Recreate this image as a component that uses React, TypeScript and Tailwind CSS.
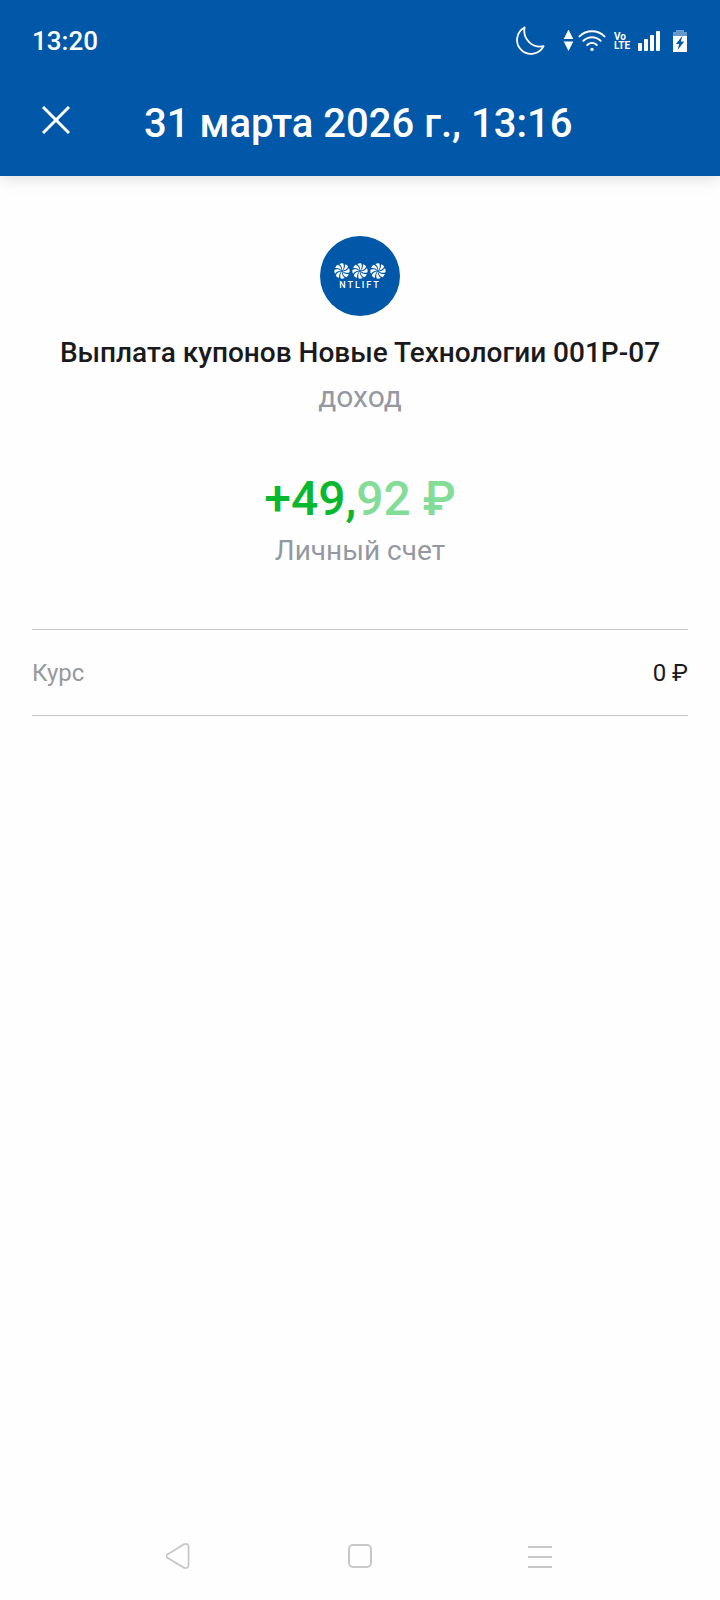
const BLADES = [0, 45, 90, 135, 180, 225, 270, 315];

function Fan() {
    return (
        <svg width="16" height="16" viewBox="-8 -8 16 16" fill="currentColor" aria-hidden="true">
            {BLADES.map((angle) => (
                <path
                    key={angle}
                    d="M0 -0.6 C0.5 -2.8 -0.4 -4.8 -2.7 -6.9 C-1.2 -7.7 0.2 -7.8 1.3 -7.5 C2.3 -5 1.8 -2.4 0 -0.6 Z"
                    transform={`rotate(${angle})`}
                />
            ))}
        </svg>
    );
}

function StatusBar() {
    return (
        <div className="flex h-[82px] items-center justify-between px-8">
            <span className="text-[26px] leading-8 font-medium">13:20</span>

            <div className="flex items-center">
                <svg width="30" height="30" viewBox="0 0 30 30" fill="none" stroke="currentColor" strokeWidth="1.8" strokeLinejoin="round" aria-label="Не беспокоить">
                    <path d="M8.6 1.5 A14 14 0 1 0 27.6 20.2 C16.5 22.6 6.4 13 8.6 1.5 Z" />
                </svg>
                <svg className="ml-4" width="12" height="22" viewBox="0 0 12 22" fill="currentColor" aria-hidden="true">
                    <path d="M6.5 -0.5 L11.3 9 H1.7 Z M6.5 21 L11.3 11.5 H1.7 Z" />
                </svg>
                <svg className="ml-1" width="28" height="22" viewBox="0 0 28 22" fill="none" stroke="currentColor" strokeWidth="2" strokeLinecap="round" aria-label="Wi-Fi">
                    <path d="M1.5 6.4 C8.5 -0.5 19.5 -0.5 26.5 6.4" />
                    <path d="M5.4 10.8 C10.4 6 17.6 6 22.6 10.8" />
                    <path d="M9.2 15 C12 12.4 16 12.4 18.8 15" />
                    <circle cx="14" cy="19.4" r="1.7" fill="currentColor" stroke="none" />
                </svg>
                <span className="ml-2 flex w-4 flex-col font-['Liberation_Sans_Narrow',Roboto,sans-serif] text-[10px] leading-[9px] font-bold">
                    <span>Vo</span>
                    <span>LTE</span>
                </span>
                <svg className="ml-2" width="22" height="20" viewBox="0 0 22 20" fill="currentColor" aria-label="Сигнал сети">
                    <rect x="0" y="12" width="4" height="8" rx="1" />
                    <rect x="6" y="8" width="4" height="12" rx="1" />
                    <rect x="12" y="4" width="4" height="16" rx="1" />
                    <rect x="18" y="0" width="4" height="20" rx="1" />
                </svg>
                <svg className="ml-3" width="16" height="22" viewBox="0 0 16 22" fill="currentColor" aria-label="Батарея заряжается">
                    <path d="M4 0 H12 V2 H15 V6 H1 V2 H4 Z" opacity="0.4" />
                    <path d="M1 6 H15 V22 H1 Z" />
                    <path d="M10.6 5.5 L4 14 H7.2 L5.6 20 L12.2 11.6 H8.8 Z" fill="#0157a8" />
                </svg>
            </div>
        </div>
    );
}

function NavBar() {
    return (
        <nav className="grid h-22 grid-cols-3 px-[12.5%] text-[#c8c8c8]">
            <button type="button" aria-label="Назад" className="flex items-center justify-center">
                <svg width="28" height="28" viewBox="0 0 28 28" fill="none" stroke="currentColor" strokeWidth="1.8">
                    <path d="M1.4 12.4 L17.7 2.4 Q22.2 0.6 22.6 5 V23 Q22.2 27.2 17.7 25.6 L1.4 15.8 Q-0.4 14 1.4 12.4 Z" />
                </svg>
            </button>
            <button type="button" aria-label="Домой" className="flex items-center justify-center">
                <span className="size-6 rounded-[5px] border-2 border-current" />
            </button>
            <button type="button" aria-label="Меню" className="flex items-center justify-center">
                <svg width="24" height="24" viewBox="0 0 24 24" stroke="currentColor" strokeWidth="2">
                    <path d="M0 3 H24 M0 13 H24 M0 23 H24" />
                </svg>
            </button>
        </nav>
    );
}

export default function App() {
    return (
        <div className="flex min-h-screen flex-col bg-[#fefefe] font-[Roboto,sans-serif] text-[#1a1a1c]">
            <header className="bg-[#0157a8] pb-2.5 text-white shadow-[0_2px_16px_rgba(0,0,0,0.14)]">
                <StatusBar />
                <div className="flex h-[84px] items-center px-8">
                    <button type="button" aria-label="Закрыть" className="flex size-12 items-center justify-center pb-2">
                        <svg width="28" height="28" viewBox="0 0 28 28" stroke="currentColor" strokeWidth="3">
                            <path d="M1 1 L27 27 M27 1 L1 27" />
                        </svg>
                    </button>
                    <h1 className="ml-16 text-[40px] leading-12 font-medium">31 марта 2026 г., 13:16</h1>
                </div>
            </header>

            <main className="flex-1 px-8 pt-15">
                <section className="flex flex-col items-center text-center">
                    <div className="flex size-20 flex-col items-center justify-center rounded-full bg-[#0157a8] text-white">
                        <div className="flex gap-0.5">
                            <Fan />
                            <Fan />
                            <Fan />
                        </div>
                        <span className="mt-0.5 text-[9px] leading-[9px] font-medium tracking-[2px]">NTLIFT</span>
                    </div>
                    <h2 className="mt-[19px] text-[28px] leading-9 font-medium">Выплата купонов Новые Технологии 001Р-07</h2>
                    <p className="mt-2 text-[30px] leading-9 text-[#9499a1]">доход</p>
                    <p className="mt-14 text-5xl leading-14 font-medium text-[#08b92f]">
                        +49,<span className="text-[#83dc97]">92&nbsp;₽</span>
                    </p>
                    <p className="mt-1.5 text-[28px] leading-9 text-[#9499a1]">Личный счет</p>
                </section>

                <dl className="mt-15 flex h-[87px] items-center justify-between border-y border-[#c6c6c8] text-2xl">
                    <dt className="text-[#97999d]">Курс</dt>
                    <dd>0&nbsp;₽</dd>
                </dl>
            </main>

            <NavBar />
        </div>
    );
}
